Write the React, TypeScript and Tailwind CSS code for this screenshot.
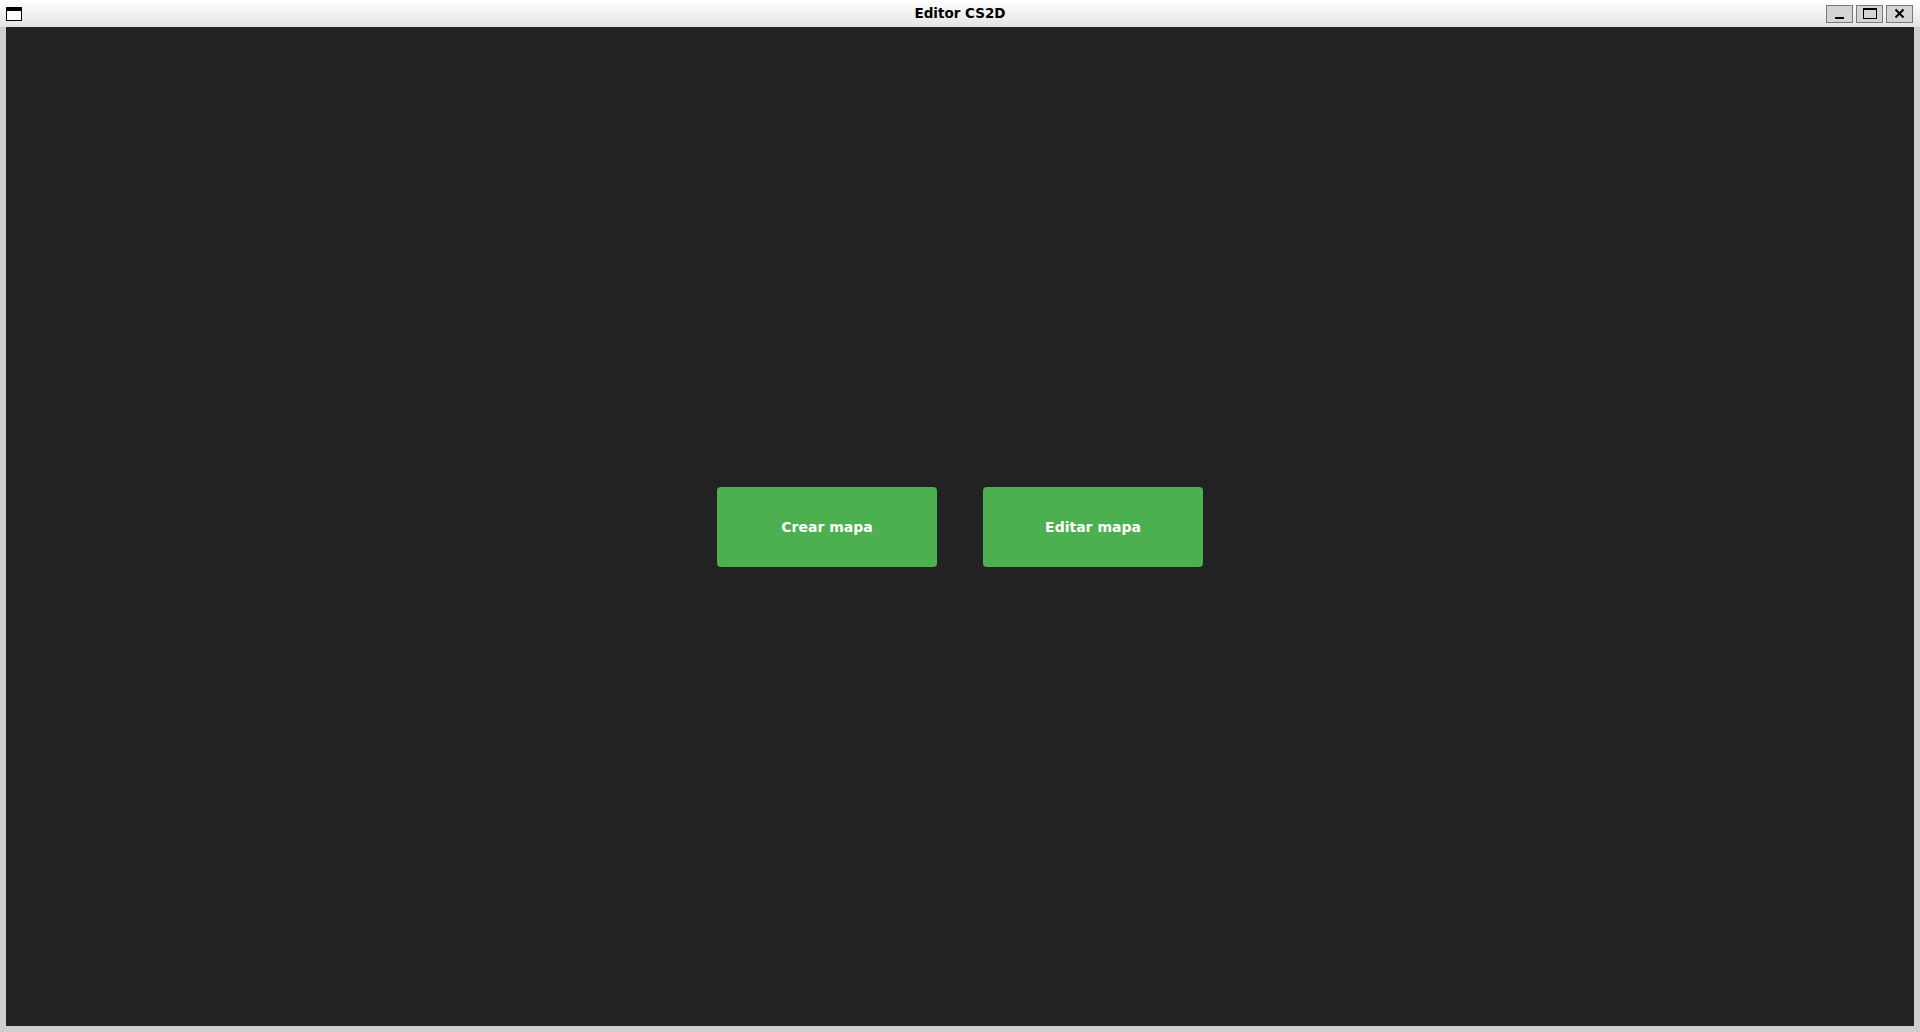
export default function App() {
  return (
    <div className="flex h-[1032px] w-[1920px] flex-col bg-[#cfcfcf] font-['DejaVu_Sans',sans-serif]">
      {/* Title bar */}
      <div className="relative flex h-[27px] shrink-0 items-center justify-between bg-gradient-to-b from-white to-[#e4e4e4] px-[6px]">
        <div className="h-[14px] w-[16px] border-[1.5px] border-black border-t-[4px] bg-white" />
        <div className="absolute inset-x-0 top-[4px] text-center text-[13.5px] leading-[18px] font-bold text-black">Editor CS2D</div>
        <div className="relative flex gap-[3px] pr-[1px]">
          <button className="flex h-[18px] w-[27px] items-end justify-center border border-[#7a7a7a] bg-[#d4d4d4] pb-[3px]">
            <span className="block h-[2px] w-[9px] bg-black" />
          </button>
          <button className="flex h-[18px] w-[27px] items-center justify-center border border-[#7a7a7a] bg-[#d4d4d4]">
            <span className="block h-[11px] w-[14px] border border-black border-t-2" />
          </button>
          <button className="flex h-[18px] w-[27px] items-center justify-center border border-[#7a7a7a] bg-[#d4d4d4]">
            <svg width="11" height="11" viewBox="0 0 11 11">
              <path d="M1.5 1.5 L9.5 9.5 M9.5 1.5 L1.5 9.5" stroke="black" strokeWidth="2" />
            </svg>
          </button>
        </div>
      </div>

      {/* Main area */}
      <div className="mx-[6px] mb-[6px] flex flex-1 items-center justify-center gap-[46px] bg-[#222222]">
        <button className="h-[80px] w-[220px] rounded-[4px] bg-[#4caf50] pt-[2px] text-[14px] font-bold text-white">
          Crear mapa
        </button>
        <button className="h-[80px] w-[220px] rounded-[4px] bg-[#4caf50] pt-[2px] text-[14px] font-bold text-white">
          Editar mapa
        </button>
      </div>
    </div>
  )
}
